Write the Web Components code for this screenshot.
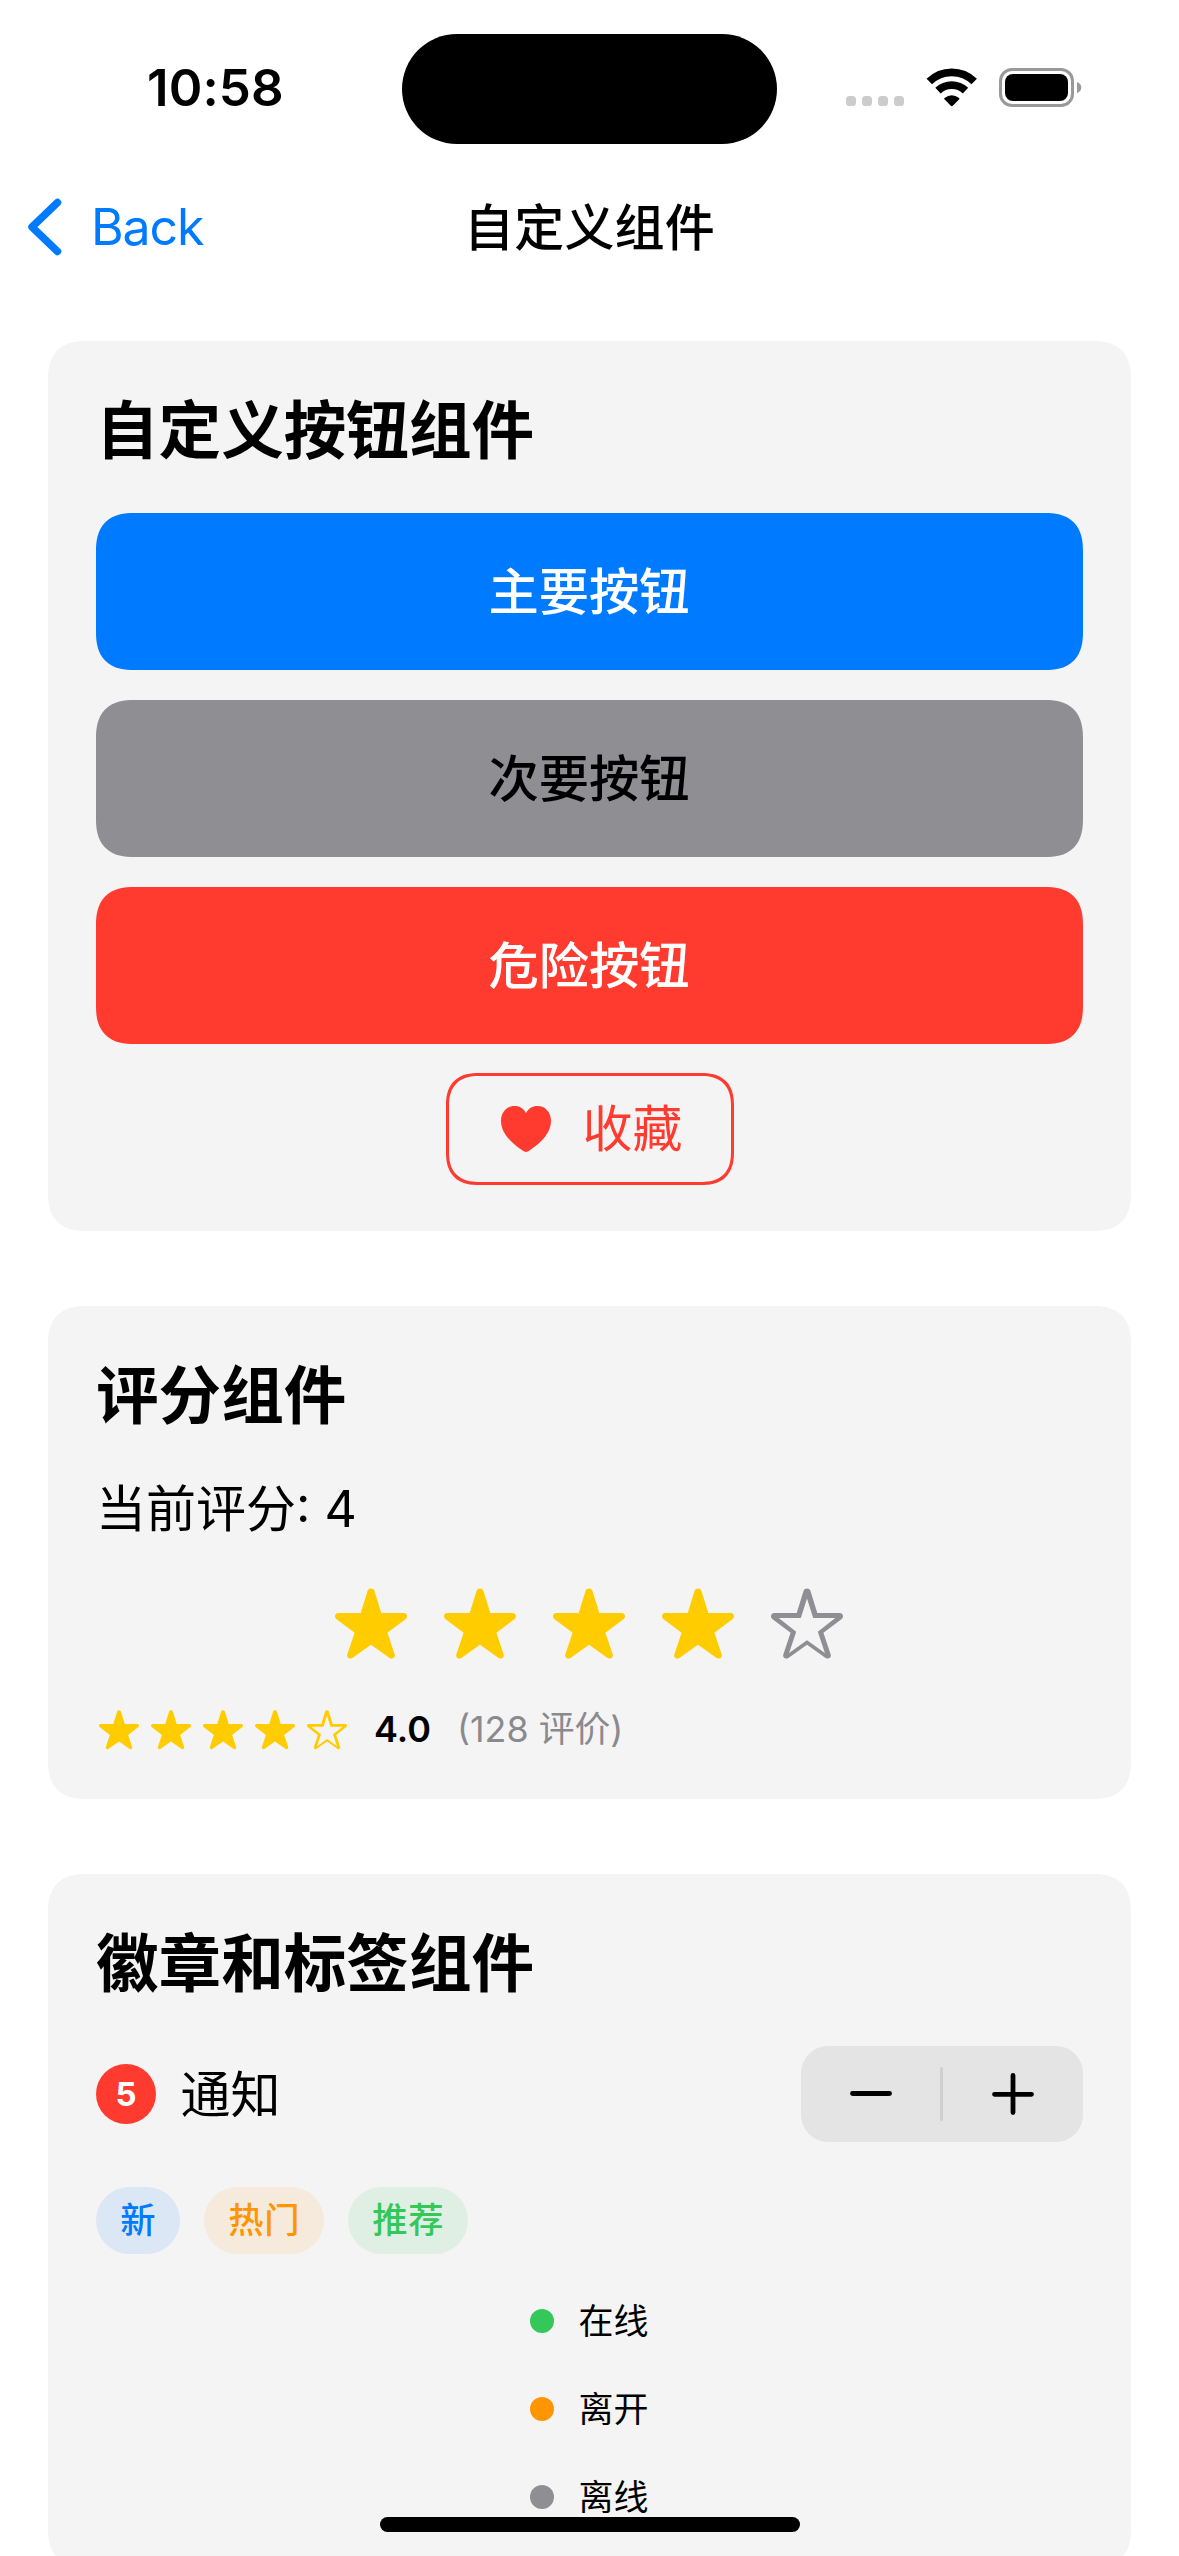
<!DOCTYPE html>
<html lang="zh-CN">
<head>
<meta charset="utf-8">
<title>自定义组件</title>
<style>
  html, body { margin: 0; padding: 0; }
  body {
    width: 1179px; height: 2556px; overflow: hidden; background: #fff; color: #000;
    font-family: Inter, "Noto Sans CJK SC", sans-serif; font-size: 50px;
  }
</style>
</head>
<body>
<demo-screen>
  <status-bar slot="top" time="10:58"></status-bar>
  <nav-bar slot="top" back="Back">自定义组件</nav-bar>

  <demo-card heading="自定义按钮组件">
    <custom-button style="--bg:#007aff;--fg:#fff">主要按钮</custom-button>
    <custom-button style="--bg:#8e8e93;--fg:#000;margin-top:30px">次要按钮</custom-button>
    <custom-button style="--bg:#ff3b30;--fg:#fff;margin-top:30px">危险按钮</custom-button>
    <like-button style="margin-top:28.5px;margin-bottom:-1.5px">收藏</like-button>
  </demo-card>

  <demo-card heading="评分组件">
    <text-line>当前评分: 4</text-line>
    <star-row style="--size:72px;--gap:37px;--off:#8e8e93;justify-content:center;margin:47px 2px 0 0" value="4"></star-row>
    <rating-summary score="4.0" style="margin-top:48px">(128 评价)</rating-summary>
  </demo-card>

  <demo-card heading="徽章和标签组件">
    <notice-row count="5">通知</notice-row>
    <tag-list style="margin-top:45px">
      <tag-pill style="--c:0,122,255">新</tag-pill>
      <tag-pill style="--c:255,149,0">热门</tag-pill>
      <tag-pill style="--c:52,199,89">推荐</tag-pill>
    </tag-list>
    <status-line style="--dot:#34c759;margin-top:45px">在线</status-line>
    <status-line style="--dot:#ff9500;margin-top:44px">离开</status-line>
    <status-line style="--dot:#8e8e93;margin-top:44px">离线</status-line>
  </demo-card>
</demo-screen>

<script>
const define = (name, render) => customElements.define(name, class extends HTMLElement {
  connectedCallback() {
    if (this.shadowRoot) return;
    this.attachShadow({ mode: 'open' }).innerHTML = render(this);
  }
});

define('demo-screen', () => `
<style>
  :host { display: block; position: relative; width: 1179px; height: 2556px; overflow: hidden; }
  main { display: flex; flex-direction: column; gap: 75px; padding: 64px 48px 0; }
  .home { position: absolute; left: 380px; top: 2517px; width: 420px; height: 15px; border-radius: 8px; background: #000; }
</style>
<slot name="top"></slot>
<main><slot></slot></main>
<div class="home"></div>`);

define('status-bar', el => `
<style>
  :host { display: flex; height: 177px; align-items: flex-start; }
  .time { width: 402px; height: 177px; box-sizing: border-box; padding: 58px 0 0 147px; font-size: 51px; line-height: 60px; font-weight: 600; letter-spacing: 0.1px; }
  .island { width: 375px; height: 110.500px; margin-top: 33.500px; border-radius: 56px; background: #000; }
  .right { display: flex; padding: 68px 0 0 69px; }
  svg { display: block; }
</style>
<div class="time">${el.getAttribute('time')}</div>
<div class="island"></div>
<div class="right"><svg width="240" height="40" viewBox="0 0 240 40">
  <g fill="#ccc"><rect x="0" y="28" width="10" height="10" rx="3.6"/><rect x="16" y="28" width="10" height="10" rx="3.6"/><rect x="32" y="28" width="10" height="10" rx="3.6"/><rect x="48" y="28" width="10" height="10" rx="3.6"/></g>
  <g fill="none" stroke="#000" stroke-width="7.8">
    <path d="M83.3 13.5A32 32 0 0 1 128.2 13.5"/>
    <path d="M92 22.6A20 20 0 0 1 119.5 22.6"/>
  </g>
  <path d="M98.4 31.2Q97.8 30.6 98.5 30Q105.8 24.4 113.1 30Q113.8 30.6 113.2 31.2L106.8 37.7Q105.8 38.6 104.8 37.7Z"/>
  <rect x="154.500" y="1.500" width="72" height="36" rx="11.500" fill="none" stroke="#999" stroke-width="3"/>
  <rect x="159" y="6" width="63" height="27" rx="8"/>
  <path d="M231 14Q235.300 15.500 235.300 19.500T231 25Z" fill="#999"/>
</svg></div>`);

define('nav-bar', el => `
<style>
  :host { display: grid; grid-template-columns: 1fr auto 1fr; align-items: center; height: 100px; line-height: 60px; }
  .back { display: flex; align-items: center; gap: 28px; padding-left: 26px; color: #007aff; }
  .back span { letter-spacing: -1.1px; }
  .title { font-weight: 500; font-size: 50px; letter-spacing: 0.2px; padding-top: 1px; }
  svg { display: block; }
</style>
<div class="back"><svg width="37" height="60" viewBox="0 0 37 60"><path d="M31.500 5.500L6 30L31.500 54.500" fill="none" stroke="#007aff" stroke-width="7.500" stroke-linecap="round" stroke-linejoin="round"/></svg><span>${el.getAttribute('back')}</span></div>
<div class="title"><slot></slot></div><div></div>`);

define('demo-card', el => `
<style>
  :host { display: flex; flex-direction: column; flex: none; padding: 48px; background: #f4f4f4; border-radius: 31px; }
  @supports (corner-shape: superellipse(1.3)) { :host { border-radius: 38px; corner-shape: superellipse(1.3); } }
  h2 { margin: 0 0 41px; font-size: 62.6px; line-height: 83px; font-weight: 700; }
</style>
<h2>${el.getAttribute('heading')}</h2><slot></slot>`);

define('custom-button', () => `
<style>
  :host { display: block; }
  button { display: flex; align-items: center; justify-content: center; width: 100%; height: 157px; border: 0; padding: 0 1px 0 0; border-radius: 31px; background: var(--bg); color: var(--fg); font: inherit; font-weight: 500; font-size: 50.300px; line-height: 60px; }
  @supports (corner-shape: superellipse(1.3)) { button { border-radius: 38px; corner-shape: superellipse(1.3); } }
</style>
<button><span><slot></slot></span></button>`);

define('like-button', () => `
<style>
  :host { display: flex; justify-content: center; }
  button { display: flex; align-items: center; gap: 32px; box-sizing: border-box; width: 288px; height: 112px; padding: 0 0 0 52px; border: 3px solid #ff3b30; border-radius: 27px; background: none; color: #ff3b30; font: inherit; line-height: 60px; }
  @supports (corner-shape: superellipse(1.3)) { button { border-radius: 33px; corner-shape: superellipse(1.3); } }
  svg { display: block; }
</style>
<button><svg width="50" height="46" viewBox="0 0 50 46"><path fill="#ff3b30" d="M25 46C24 46 22.500 45 20.500 43.700C8 35.300 0 25.500 0 15C0 6 6 0 13.500 0C18.500 0 22.600 2.600 25 7C27.400 2.600 31.500 0 36.500 0C44 0 50 6 50 15C50 25.500 42 35.300 29.500 43.700C27.500 45 26 46 25 46Z"/></svg><span><slot></slot></span></button>`);

define('text-line', () => `
<style>:host { display: block; line-height: 63px; }</style><slot></slot>`);

define('star-row', el => {
  const value = +el.getAttribute('value');
  const solid = 'M32.600 2.700C33.600 -0.300 38.400 -0.300 39.400 2.700L46.300 25H68.500C72.300 25 73.200 29.200 70.400 31.200L52.400 44.800L59.700 66.500C60.600 69.700 57.500 71.800 54.600 69.900L36 56.800L17.400 69.900C14.500 71.800 11.400 69.700 12.300 66.500L19.600 44.800L1.600 31.200C-1.200 29.200 -0.300 25 3.500 25H25.700Z';
  const hole = 'M36 10.500L42.200 30.100H64.300L46.800 43.800L53.900 65.100L36 52.200L18.100 65.100L25.200 43.800L7.700 30.100H29.800Z';
  return `
<style>
  :host { display: flex; gap: var(--gap); }
  svg { display: block; width: var(--size); height: var(--size); }
</style>` + [1, 2, 3, 4, 5].map(i => `<svg viewBox="0 0 72 72"><path fill-rule="evenodd" fill="${i > value ? 'var(--off)' : '#ffcc00'}" d="${solid}${i > value ? hole : ''}"/></svg>`).join('');
});

define('rating-summary', el => `
<style>
  :host { display: flex; align-items: center; height: 43px; font-size: 36px; line-height: 43px; }
  star-row { --size: 40px; --gap: 12px; --off: #ffcc00; padding-left: 3px; }
  b { font-weight: 600; margin-left: 27px; }
  .n { color: #8a8a8e; margin-left: 26px; font-size: 35.800px; }
</style>
<star-row value="4"></star-row><b>${el.getAttribute('score')}</b><span class="n"><slot></slot></span>`);

define('notice-row', el => `
<style>
  :host { display: flex; align-items: center; height: 96px; line-height: 60px; }
  .badge { width: 60px; height: 60px; border-radius: 50%; background: #ff3b30; color: #fff; font-size: 33px; font-weight: 700; text-align: center; }
  .label { margin-left: 24.500px; padding-top: 1px; flex: 1; }
</style>
<div class="badge">${el.getAttribute('count')}</div><div class="label"><slot></slot></div><count-stepper></count-stepper>`);

define('count-stepper', () => `
<style>
  :host { display: flex; align-items: center; width: 282px; height: 96px; border-radius: 27px; background: #e4e4e4; }
  span { flex: 1; display: flex; justify-content: center; }
  i { width: 3px; height: 54px; border-radius: 1.500px; background: #cfcfcf; margin-left: -1px; }
  svg { display: block; stroke: #000; stroke-width: 4.800; stroke-linecap: round; }
</style>
<span><svg width="42" height="42"><path d="M2.500 20.500H39.500"/></svg></span><i></i><span><svg width="42" height="42"><path d="M2.500 21.300H39.500M21 2.500V39.500"/></svg></span>`);

define('tag-list', () => `<style>:host { display: flex; gap: 24px; }</style><slot></slot>`);

define('tag-pill', () => `
<style>
  :host { display: block; height: 67px; line-height: 67px; padding: 0 23.650px 0 24.350px; border-radius: 34px; font-size: 35.300px; letter-spacing: 0.700px; font-weight: 500; color: rgb(var(--c)); background: rgba(var(--c), .1); }
</style>
<slot></slot>`);

define('status-line', () => `
<style>
  :host { display: flex; justify-content: center; align-items: center; gap: 24px; height: 44px; line-height: 44px; font-size: 35px; }
  i { width: 24px; height: 24px; border-radius: 50%; background: var(--dot); }
</style>
<i></i><span><slot></slot></span>`);
</script>
</body>
</html>
